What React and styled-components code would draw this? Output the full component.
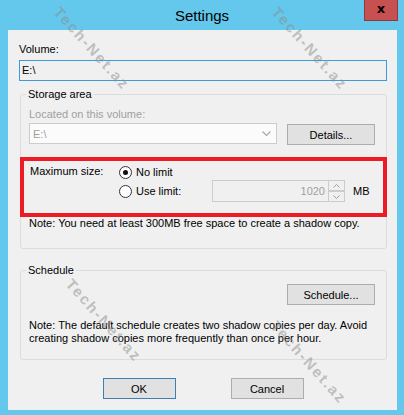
import React from "react";
import styled, { createGlobalStyle, css } from "styled-components";

const GlobalStyle = createGlobalStyle`
  html, body {
    margin: 0;
    padding: 0;
  }
  body {
    background: #63c8eb;
    font-family: "Liberation Sans", Arial, sans-serif;
    font-size: 11px;
    color: #000;
  }
`;

function Settings() {
  return (
    <Window>
      <TitleBar>
        <Title>Settings</Title>
        <CloseButton>x</CloseButton>
      </TitleBar>

      <Client>
        <Label>Volume:</Label>
        <TextBox>E:\</TextBox>

        <Group $top={6}>
          <Legend>Storage area</Legend>
          <Label $disabled>Located on this volume:</Label>
          <ComboRow>
            <Combo>
              <span>E:\</span>
              <svg width="9" height="6" viewBox="0 0 9 6">
                <polyline points="0.5,0.5 4.5,4.5 8.5,0.5" fill="none" stroke="#a8a8a8" strokeWidth="1.2" />
              </svg>
            </Combo>
            <Button $width={88} $offset={1}>Details...</Button>
          </ComboRow>

          <Highlight>
            <MaxLabel>Maximum size:</MaxLabel>
            <Options>
              <OptionRow $height={16}>
                <Choice>
                  <Radio $checked />
                  <span>No limit</span>
                </Choice>
              </OptionRow>
              <OptionRow $height={22}>
                <Choice>
                  <Radio />
                  <span>Use limit:</span>
                </Choice>
                <Spin>
                  <SpinField>1020</SpinField>
                  <SpinButtons>
                    <SpinButton>
                      <svg width="7" height="4" viewBox="0 0 7 4">
                        <polyline points="0.5,3.5 3.5,0.5 6.5,3.5" fill="none" stroke="#a0a0a0" strokeWidth="1" />
                      </svg>
                    </SpinButton>
                    <SpinButton>
                      <svg width="7" height="4" viewBox="0 0 7 4">
                        <polyline points="0.5,0.5 3.5,3.5 6.5,0.5" fill="none" stroke="#a0a0a0" strokeWidth="1" />
                      </svg>
                    </SpinButton>
                  </SpinButtons>
                </Spin>
                <Unit>MB</Unit>
              </OptionRow>
            </Options>
          </Highlight>

          <Note $top={-1}>Note: You need at least 300MB free space to create a shadow copy.</Note>
        </Group>

        <Group $top={14} $bottom={14}>
          <Legend>Schedule</Legend>
          <ButtonRight>
            <Button $width={88}>Schedule...</Button>
          </ButtonRight>
          <Note $top={14} $lh={13}>
            Note: The default schedule creates two shadow copies per day. Avoid
            <br />
            creating shadow copies more frequently than once per hour.
          </Note>
        </Group>

        <Footer>
          <Button $width={73} $default>OK</Button>
          <Button $width={73}>Cancel</Button>
        </Footer>
      </Client>

      <Watermark $x={92} $y={48}>Tech-Net.az</Watermark>
      <Watermark $x={310} $y={48}>Tech-Net.az</Watermark>
      <Watermark $x={104} $y={320}>Tech-Net.az</Watermark>
      <Watermark $x={309} $y={362}>Tech-Net.az</Watermark>
    </Window>
  );
}

const Window = styled.div`
  position: relative;
  width: 404px;
  height: 415px;
  display: flex;
  flex-direction: column;
  background: #63c8eb;
  overflow: hidden;
`;

const TitleBar = styled.div`
  height: 30px;
  display: grid;
  grid-template-columns: 1fr auto 1fr;
  align-items: start;
  flex-shrink: 0;
`;

const Title = styled.div`
  grid-column: 2;
  font-size: 15px;
  line-height: 31px;
  color: #000;
`;

const CloseButton = styled.div`
  grid-column: 3;
  justify-self: end;
  margin-right: 6px;
  width: 34px;
  height: 21px;
  box-sizing: border-box;
  background: #c75050;
  border: 1px solid #8c3b3b;
  border-top: none;
  display: flex;
  align-items: center;
  justify-content: center;
  font-family: "DejaVu Sans", sans-serif;
  font-weight: bold;
  font-size: 13px;
  line-height: 1;
  padding-bottom: 3px;
  color: #000;
`;

const Client = styled.div`
  flex: 1;
  margin: 0 7px 5px 8px;
  background: #f0f0f0;
  padding: 12px 10px 0 11px;
  display: flex;
  flex-direction: column;
`;

const Label = styled.div`
  line-height: 15px;
  color: ${(p) => (p.$disabled ? "#a0a0a0" : "#000")};
`;

const TextBox = styled.div`
  margin-top: 3px;
  height: 21px;
  box-sizing: border-box;
  border: 1px solid #3d9bd9;
  padding-left: 2px;
  line-height: 19px;
`;

const Group = styled.fieldset`
  margin: ${(p) => p.$top || 0}px 0 0 1px;
  border: 1px solid #dcdcdc;
  border-radius: 3px;
  padding: 5px 11px ${(p) => p.$bottom ?? 17}px 8px;
  min-width: 0;
`;

const Legend = styled.legend`
  padding: 0 2px;
  margin-left: -3px;
  line-height: 15px;
`;

const ComboRow = styled.div`
  display: flex;
  align-items: flex-start;
  gap: 10px;
  margin-top: 1px;
`;

const Combo = styled.div`
  width: 248px;
  height: 21px;
  box-sizing: border-box;
  border: 1px solid #cccccc;
  background: #fbfbfb;
  color: #a0a0a0;
  display: flex;
  align-items: center;
  justify-content: space-between;
  padding: 0 5px 0 3px;
`;

const Button = styled.div`
  width: ${(p) => p.$width}px;
  height: 21px;
  margin-top: ${(p) => p.$offset || 0}px;
  box-sizing: border-box;
  background: #e1e1e1;
  border: 1px solid #adadad;
  display: flex;
  align-items: center;
  justify-content: center;
  ${(p) =>
    p.$default &&
    css`
      border-color: #3c7fb1;
    `}
`;

const Highlight = styled.div`
  margin: 12px -12px 0 -9px;
  border: 4px solid #ed1c24;
  padding: 3px 6px 11px 6px;
  display: flex;
  align-items: flex-start;
`;

const MaxLabel = styled.div`
  width: 89px;
  line-height: 16px;
  margin-top: -1px;
`;

const Options = styled.div`
  display: flex;
  flex-direction: column;
`;

const OptionRow = styled.div`
  height: ${(p) => p.$height}px;
  display: flex;
  align-items: center;
`;

const Choice = styled.div`
  width: 93px;
  display: flex;
  align-items: center;
  gap: 4px;
  line-height: 16px;
`;

const Radio = styled.span`
  width: 13px;
  height: 13px;
  box-sizing: border-box;
  border-radius: 50%;
  border: 1px solid #333333;
  background: #ffffff;
  display: flex;
  align-items: center;
  justify-content: center;
  margin-top: 1px;

  &::after {
    content: "";
    display: ${(p) => (p.$checked ? "block" : "none")};
    width: 5px;
    height: 5px;
    border-radius: 50%;
    background: #111;
  }
`;

const Spin = styled.div`
  display: flex;
  height: 22px;
`;

const SpinField = styled.div`
  width: 116px;
  box-sizing: border-box;
  border: 1px solid #cccccc;
  border-right: none;
  background: #f0f0f0;
  color: #a0a0a0;
  text-align: right;
  padding-right: 3px;
  line-height: 20px;
`;

const SpinButtons = styled.div`
  width: 17px;
  display: flex;
  flex-direction: column;
`;

const SpinButton = styled.div`
  flex: 1;
  box-sizing: border-box;
  border: 1px solid #cccccc;
  background: #f0f0f0;
  display: flex;
  align-items: center;
  justify-content: center;
`;

const Unit = styled.span`
  margin-left: 8px;
  line-height: 16px;
`;

const Note = styled.div`
  margin-top: ${(p) => p.$top || 0}px;
  line-height: ${(p) => p.$lh || 15}px;
  white-space: nowrap;
`;

const ButtonRight = styled.div`
  display: flex;
  justify-content: flex-end;
  margin-top: 1px;
`;

const Footer = styled.div`
  display: flex;
  justify-content: center;
  gap: 55px;
  margin-top: 18px;
`;

const Watermark = styled.div`
  position: absolute;
  left: ${(p) => p.$x}px;
  top: ${(p) => p.$y}px;
  transform: translate(-50%, -50%) rotate(48deg);
  font-family: "Liberation Sans", sans-serif;
  font-weight: bold;
  font-size: 15px;
  letter-spacing: 2px;
  color: rgba(140, 140, 140, 0.5);
  white-space: nowrap;
  pointer-events: none;
`;

export default function App() {
  return (
    <>
      <GlobalStyle />
      <Settings />
    </>
  );
}
